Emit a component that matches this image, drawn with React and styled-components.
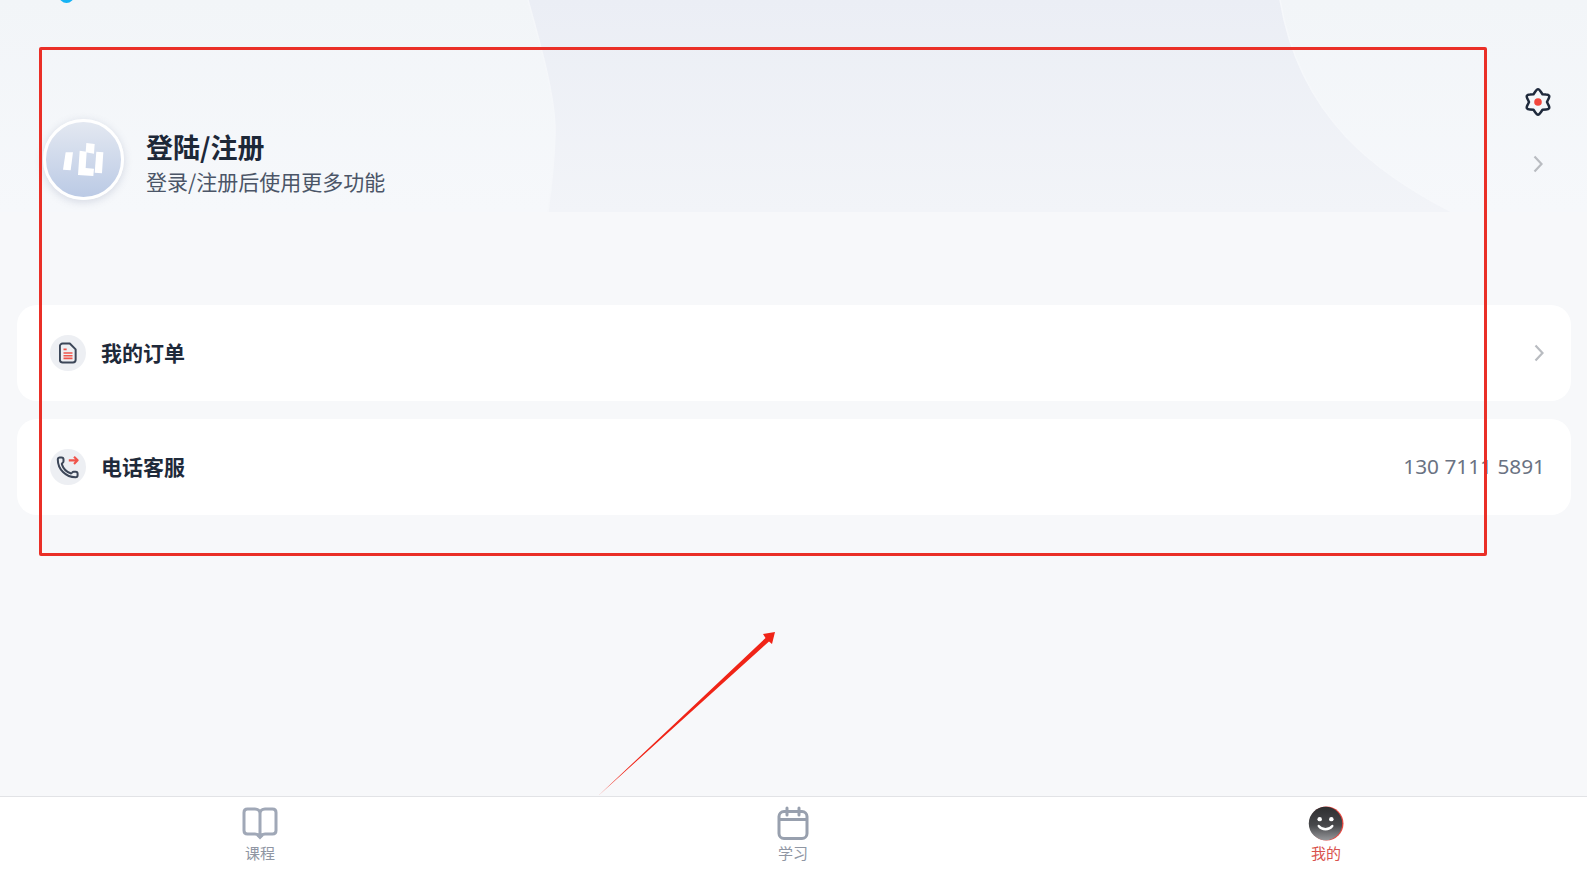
import React from 'react'
import styled, { createGlobalStyle } from 'styled-components'

const FONT = `"Noto Sans", "Noto Sans CJK SC", sans-serif`

const GlobalStyle = createGlobalStyle`
  html, body {
    margin: 0;
    padding: 0;
    height: 100%;
    background: #f7f8fa;
    font-family: ${FONT};
  }
`

const gearPath = (() => {
  const cx = 14
  const cy = 14
  const pt = (r, deg) => {
    const a = (deg * Math.PI) / 180
    return `${(cx + r * Math.cos(a)).toFixed(2)} ${(cy + r * Math.sin(a)).toFixed(2)}`
  }
  let d = `M${pt(9, -120)}`
  for (let i = 0; i < 6; i++) {
    const peak = -90 + i * 60
    d += ` L${pt(11, peak - 13)} Q${pt(14.8, peak)} ${pt(11, peak + 13)} L${pt(9, peak + 30)}`
  }
  return d + 'Z'
})()

function App() {
  return (
    <Page>
      <GlobalStyle />
      <Band>
        <BandArt viewBox="0 0 1587 212" preserveAspectRatio="none">
          <defs>
            <linearGradient id="bandMid" x1="0" y1="0" x2="0" y2="1">
              <stop offset="0" stopColor="#ebeef5" />
              <stop offset="1" stopColor="#f2f4f8" />
            </linearGradient>
            <linearGradient id="bandSide" x1="0" y1="0" x2="0" y2="1">
              <stop offset="0" stopColor="#f2f5f8" />
              <stop offset="1" stopColor="#f6f8fb" />
            </linearGradient>
          </defs>
          <rect width="1587" height="212" fill="url(#bandSide)" />
          <path
            d="M528 0 C 542 50 556 100 555 135 C 554 165 551 190 548 212 L1452 212 C 1380 175 1300 120 1280 0 Z"
            fill="url(#bandMid)"
          />
          <path d="M528 0 C 542 50 556 100 555 135 C 554 165 551 190 548 212" fill="none" stroke="#f5f7fa" strokeWidth="1.5" />
          <path d="M1452 212 C 1380 175 1300 120 1280 0" fill="none" stroke="#f6f8fb" strokeWidth="1.5" />
        </BandArt>
      </Band>

      <Main>
        <SettingsRow>
          <svg width="28" height="28" viewBox="0 0 28 28">
            <path d={gearPath} fill="none" stroke="#1f2a3c" strokeWidth="2.500" strokeLinejoin="round" />
            <circle cx="14" cy="14" r="3.800" fill="#f2463c" />
          </svg>
        </SettingsRow>

        <Profile>
          <Avatar>
            <svg width="100%" height="100%" viewBox="47 65 225 225">
              <g fill="#fff">
                <polygon points="106,156 128,156 121,210 98,208" />
                <polygon points="168,128 193,131 191,160 166,156" />
                <polygon points="148,151 169,154 166,203 191,205 189,227 143,224" />
                <polygon points="198,154 219,156 215,219 193,217" />
              </g>
            </svg>
          </Avatar>
          <ProfileText>
            <ProfileTitle>登陆/注册</ProfileTitle>
            <ProfileHint>登录/注册后使用更多功能</ProfileHint>
          </ProfileText>
          <ProfileArrow>
            <Chevron />
          </ProfileArrow>
        </Profile>

        <CardList>
          <Card>
            <IconBubble>
              <svg width="18" height="22" viewBox="0 0 20 24" fill="none">
                <path
                  d="M4 1.500h8l6.500 6.500v11.500a3 3 0 0 1-3 3H4a3 3 0 0 1-3-3v-15a3 3 0 0 1 3-3Z"
                  stroke="#3c4658"
                  strokeWidth="2.200"
                  strokeLinejoin="round"
                />
                <path d="M5 8h3.500M5 12h10M5 15h10M5 18h10" stroke="#f0544b" strokeWidth="1.800" />
              </svg>
            </IconBubble>
            <CardLabel>我的订单</CardLabel>
            <CardEnd>
              <Chevron />
            </CardEnd>
          </Card>
          <Card>
            <IconBubble>
              <svg width="24" height="24" viewBox="0 0 24 24" fill="none">
                <path
                  d="M14.600 18.300a1 1 0 0 0 1.200-.3l.4-.5a2 2 0 0 1 1.600-.8h1.800a2 2 0 0 1 2 2v1.500a2 2 0 0 1-2 2A17.800 17.800 0 0 1 1.800 4.400a2 2 0 0 1 2-2h1.700a2 2 0 0 1 2 2v1.800a2 2 0 0 1-.8 1.600l-.5.4a1 1 0 0 0-.3 1.200 14 14 0 0 0 8.700 8.900"
                  stroke="#3c4658"
                  strokeWidth="2"
                  strokeLinecap="round"
                  strokeLinejoin="round"
                />
                <path d="M12 7h9.500M17.800 3l4 4-4 4" stroke="#f0544b" strokeWidth="2.400" strokeLinejoin="round" transform="translate(2 -1) scale(.9)" />
              </svg>
            </IconBubble>
            <CardLabel>电话客服</CardLabel>
            <CardEnd>
              <PhoneNumber>130 7111 5891</PhoneNumber>
            </CardEnd>
          </Card>
        </CardList>
      </Main>

      <TabBar>
        <Tab>
          <svg width="36" height="33" viewBox="0 0 36 33" fill="none">
            <path
              d="M18 29.500V6.500C18 3.700 15.800 2 13 2H5.500C3.400 2 2 3.400 2 5.500v18C2 25.600 3.400 27 5.500 27H13c2.300 0 3.800 1 5 2.500Zm0 0c1.200-1.500 2.700-2.500 5-2.500h7.500c2.100 0 3.500-1.400 3.500-3.500v-18C34 3.400 32.600 2 30.500 2H23c-2.800 0-5 1.700-5 4.500"
              stroke="#a0a8b7"
              strokeWidth="3"
              strokeLinejoin="round"
            />
            <path d="M14.500 29h7L18 32.500Z" fill="#a0a8b7" />
          </svg>
          <TabLabel>课程</TabLabel>
        </Tab>
        <Tab>
          <svg width="32" height="34" viewBox="0 0 32 34" fill="none">
            <rect x="2" y="5" width="28" height="27" rx="5" stroke="#98a0ae" strokeWidth="3" />
            <path d="M2.500 13h27" stroke="#98a0ae" strokeWidth="3" />
            <path d="M10 1.500v7M22 1.500v7" stroke="#98a0ae" strokeWidth="3" strokeLinecap="round" />
          </svg>
          <TabLabel>学习</TabLabel>
        </Tab>
        <Tab>
          <svg width="36" height="36" viewBox="0 0 36 36">
            <defs>
              <linearGradient id="smileFill" x1="0" y1="0" x2="0" y2="1">
                <stop offset="0" stopColor="#2e2e30" />
                <stop offset=".55" stopColor="#47484b" />
                <stop offset="1" stopColor="#96979a" />
              </linearGradient>
            </defs>
            <circle cx="18.500" cy="18" r="17.500" fill="#e8463f" />
            <circle cx="17.500" cy="18" r="17.200" fill="url(#smileFill)" />
            <circle cx="11.500" cy="13.500" r="2.300" fill="#fff" />
            <circle cx="23.500" cy="13.500" r="2.300" fill="#fff" />
            <path d="M10.500 20.500c3.500 4.500 10.500 4.500 14 0" fill="none" stroke="#fff" strokeWidth="2.400" strokeLinecap="round" />
          </svg>
          <TabLabel $active>我的</TabLabel>
        </Tab>
      </TabBar>

      <TopDot />
      <MarkBox />
      <MarkArrow viewBox="0 0 200 180">
        <polygon points="0,166 167.500,8 165,4 177,2 174,14 171,11.500" fill="#f02417" />
      </MarkArrow>
    </Page>
  )
}

function Chevron() {
  return (
    <svg width="10" height="18" viewBox="0 0 10 18" fill="none">
      <path d="M1.500 1.500L8.500 9L1.500 16.500" stroke="#b9bcc1" strokeWidth="2.200" />
    </svg>
  )
}

const Page = styled.div`
  position: relative;
  width: 100%;
  height: 100vh;
  min-height: 869px;
  overflow: hidden;
  display: flex;
  flex-direction: column;
  background: #f7f8fa;
`

const Band = styled.div`
  position: absolute;
  top: 0;
  left: 0;
  right: 0;
  height: 212px;
`

const BandArt = styled.svg`
  display: block;
  width: 100%;
  height: 100%;
`

const Main = styled.main`
  position: relative;
  flex: 1;
  display: flex;
  flex-direction: column;
  padding-top: 88px;
`

const SettingsRow = styled.div`
  height: 28px;
  display: flex;
  justify-content: flex-end;
  padding-right: 35px;
`

const Profile = styled.section`
  height: 80px;
  margin-top: 3px;
  display: flex;
  align-items: center;
  padding: 0 44px 0 43px;
`

const Avatar = styled.div`
  width: 75px;
  height: 75px;
  border: 3px solid #fff;
  border-radius: 50%;
  overflow: hidden;
  flex-shrink: 0;
  background: linear-gradient(180deg, #e3e8f1, #bbcae5);
  box-shadow: 0 2px 8px rgba(90, 105, 140, 0.22);
`

const ProfileText = styled.div`
  margin-left: 22px;
  padding-top: 8px;
  display: flex;
  flex-direction: column;
  font-family: "Noto Sans CJK SC", sans-serif;
`

const ProfileTitle = styled.div`
  font-size: 27px;
  line-height: 36px;
  font-weight: 700;
  color: #1d2838;
`

const ProfileHint = styled.div`
  font-size: 21px;
  line-height: 32px;
  color: #4b5567;
`

const ProfileArrow = styled.div`
  margin-left: auto;
  padding-top: 10px;
  display: flex;
`

const CardList = styled.div`
  margin-top: 106px;
  padding: 0 16px 0 17px;
  display: flex;
  flex-direction: column;
  gap: 18px;
`

const Card = styled.div`
  height: 96px;
  background: #fff;
  border-radius: 20px;
  display: flex;
  align-items: center;
  padding: 0 27px 0 33px;
`

const IconBubble = styled.div`
  width: 36px;
  height: 36px;
  border-radius: 50%;
  background: #edeff3;
  display: flex;
  align-items: center;
  justify-content: center;
  flex-shrink: 0;
`

const CardLabel = styled.div`
  margin-left: 15px;
  margin-top: -2px;
  font-family: "Noto Sans CJK SC", sans-serif;
  font-size: 21px;
  font-weight: 700;
  color: #1f2a3a;
`

const CardEnd = styled.div`
  margin-left: auto;
  display: flex;
  align-items: center;
`

const PhoneNumber = styled.span`
  font-size: 20.800px;
  color: #6a7282;
  margin-top: -2px;
  margin-right: -1px;
`

const TabBar = styled.nav`
  position: relative;
  height: 73px;
  box-sizing: border-box;
  border-top: 1px solid #e2e3e6;
  background: #fff;
  display: flex;
  justify-content: space-between;
  padding: 9px 231px 0 230px;
`

const Tab = styled.div`
  width: 60px;
  display: flex;
  flex-direction: column;
  align-items: center;
  gap: 2px;
  svg {
    display: block;
    height: 35px;
  }
`

const TabLabel = styled.span`
  font-family: "Noto Sans CJK SC", sans-serif;
  font-size: 15px;
  line-height: 20px;
  color: ${(p) => (p.$active ? '#d9534e' : '#8f96a3')};
`

const TopDot = styled.div`
  position: absolute;
  left: 59px;
  top: -12px;
  width: 15px;
  height: 15px;
  border-radius: 50%;
  background: #16b3f4;
`

const MarkBox = styled.div`
  position: absolute;
  left: 39px;
  top: 47px;
  width: 1448px;
  height: 509px;
  box-sizing: border-box;
  border: 3.500px solid #ea2f27;
  border-radius: 2px;
  pointer-events: none;
`

const MarkArrow = styled.svg`
  position: absolute;
  left: 598px;
  top: 630px;
  width: 200px;
  height: 180px;
  pointer-events: none;
`

export default App
